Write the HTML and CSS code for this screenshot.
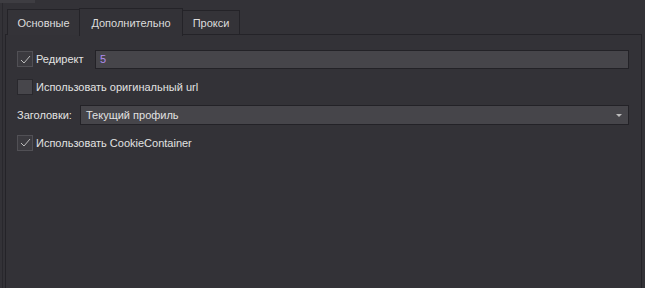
FILE: index.html
```html
<!DOCTYPE html>
<html lang="ru">
<head>
    <meta charset="UTF-8">
    <meta name="viewport" content="width=device-width, initial-scale=1.0">
    <title>Настройки запроса</title>
    <link rel="stylesheet" href="styles.css">
</head>
<body>

    <div class="top-stub"></div>

    <div class="frame">
        <div class="tabs">
            <div class="tab tab-main">Основные</div>
            <div class="tab tab-active">Дополнительно</div>
            <div class="tab tab-proxy">Прокси</div>
        </div>

        <div class="panel">
            <div class="row">
                <span class="check checked">
                    <svg width="11" height="9" viewBox="0 0 11 9"><path d="M1 5 L4 8 L10 1" fill="none" stroke="#bcbcbc" stroke-width="1"/></svg>
                </span>
                <span class="label label-redirect">Редирект</span>
                <div class="field field-redirect">5</div>
            </div>

            <div class="row">
                <span class="check"></span>
                <span class="label">Использовать оригинальный url</span>
            </div>

            <div class="row">
                <span class="label label-headers">Заголовки:</span>
                <div class="field field-select">
                    Текущий профиль
                    <span class="arrow"></span>
                </div>
            </div>

            <div class="row row-last">
                <span class="check checked">
                    <svg width="11" height="9" viewBox="0 0 11 9"><path d="M1 5 L4 8 L10 1" fill="none" stroke="#bcbcbc" stroke-width="1"/></svg>
                </span>
                <span class="label">Использовать CookieContainer</span>
            </div>
        </div>
    </div>

</body>
</html>
```

FILE: styles.css
```css
html, body {
    height: 100%;
}

body {
    margin: 0;
    background-color: #333237; /* тёмный фон окна */
    color: #e2e2e2;
    font-family: "Liberation Sans", Arial, sans-serif;
    font-size: 11px;
    display: flex;
    flex-direction: column;
    overflow: hidden;
}

.top-stub {
    width: 35px;
    height: 3px;
    background-color: #3e3d42;
}

.frame {
    flex: 1;
    margin-left: 2px;
    border-left: 1px solid #29282d;
    padding-left: 2px;
    padding-right: 3px;
    padding-top: 5px;
    display: flex;
    flex-direction: column;
}

.tabs {
    display: flex;
    margin-left: 2px;
    height: 27px;
    position: relative;
    z-index: 1;
}

.tab {
    box-sizing: border-box;
    border: 1px solid #242328;
    border-bottom: none;
    margin-top: 1px;
    height: 26px;
    display: flex;
    align-items: center;
    justify-content: center;
    color: #dcdcdc;
    background-color: #343338;
}

.tab-main {
    width: 73px;
}

.tab-active {
    width: 104px;
    margin-left: -1px;
    margin-top: 0;
    height: 28px;
    background-color: #333237;
}

.tab-proxy {
    width: 58px;
    margin-left: -1px;
    margin-top: 2px;
    height: 24px;
}

.panel {
    flex: 1;
    border: 1px solid #242328;
    border-bottom: none;
    margin-top: -1px;
    padding: 15px 12px 0 11px;
    display: flex;
    flex-direction: column;
    gap: 10px;
}

.row {
    display: flex;
    align-items: center;
    height: 18px;
}

.row-last {
    height: 17px;
}

.check {
    box-sizing: border-box;
    width: 16px;
    height: 16px;
    border: 1px solid #29282d;
    background-color: #47464b;
    display: flex;
    align-items: center;
    justify-content: center;
    margin-right: 3px;
}

.check.checked {
    background-color: #3b3a3f;
    border-color: #515055;
}

.label {
    white-space: nowrap;
}

.label-redirect {
    width: 59px;
}

.label-headers {
    width: 63px;
}

.field {
    box-sizing: border-box;
    flex: 1;
    height: 19px;
    border: 1px solid #232227;
    background-color: #46454a;
    padding-left: 5px;
    display: flex;
    align-items: center;
    position: relative;
}

.field-redirect {
    padding-left: 4px;
    color: #b08cf0;
}

.field-select {
    height: 20px;
}

.arrow {
    position: absolute;
    right: 6px;
    top: 8px;
    width: 0;
    height: 0;
    border-left: 3px solid transparent;
    border-right: 3px solid transparent;
    border-top: 3px solid #bdbdbd;
}
```
